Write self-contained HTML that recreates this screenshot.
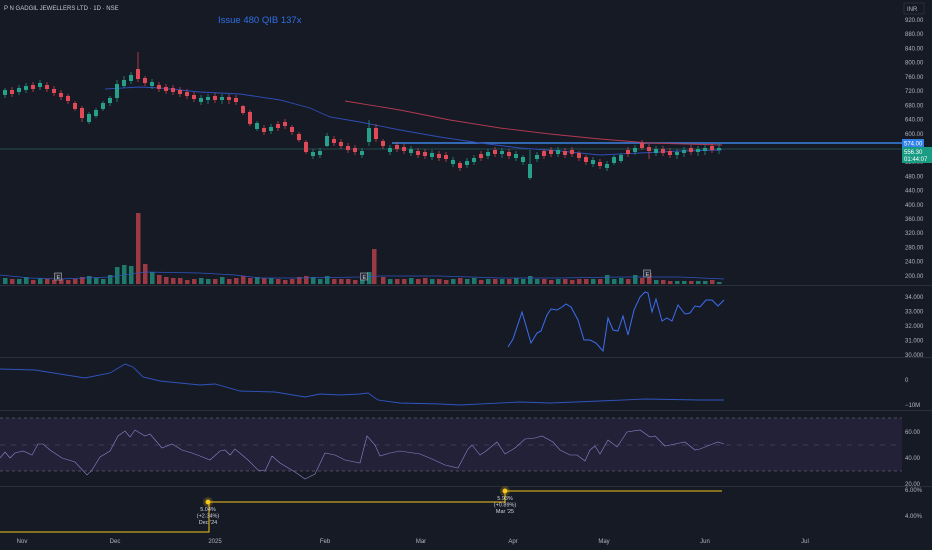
<!DOCTYPE html>
<html><head><meta charset="utf-8">
<style>
html,body{margin:0;padding:0;background:#161a25;}
body{width:932px;height:550px;overflow:hidden;position:relative;font-family:"Liberation Sans",sans-serif;}
svg{position:absolute;left:0;top:0}
.ax{fill:#b2b5be;font-size:6px;font-family:"Liberation Sans",sans-serif}
.G rect{fill:#26a08b}.R rect{fill:#e04a56}
.VG rect{fill:#1f7a6e}.VR rect{fill:#9c3a43}
.lb{fill:#d1d4dc;font-size:5.5px;font-family:"Liberation Sans",sans-serif}
</style></head>
<body>
<svg width="932" height="550" viewBox="0 0 932 550" xmlns="http://www.w3.org/2000/svg">
<rect width="932" height="550" fill="#161a25"/>
<rect x="0" y="285" width="932" height="1" fill="#2a2e39"/>
<rect x="0" y="357" width="932" height="1" fill="#2a2e39"/>
<rect x="0" y="410" width="932" height="1" fill="#2a2e39"/>
<rect x="0" y="486" width="932" height="1" fill="#2a2e39"/>
<rect x="0" y="418" width="902" height="53" fill="#7e57c2" fill-opacity="0.12"/>
<line x1="0" y1="418" x2="902" y2="418" stroke="#787b86" stroke-dasharray="3,3" stroke-width="0.6"/>
<line x1="0" y1="445" x2="902" y2="445" stroke="#787b86" stroke-dasharray="5,6" stroke-width="0.5" opacity="0.6"/>
<line x1="0" y1="471" x2="902" y2="471" stroke="#787b86" stroke-dasharray="3,3" stroke-width="0.6"/>

<!-- price axis -->
<g class="ax">
<text x="905" y="22">920.00</text><text x="905" y="36">880.00</text><text x="905" y="50.5">840.00</text><text x="905" y="64.7">800.00</text><text x="905" y="78.9">760.00</text><text x="905" y="93.1">720.00</text><text x="905" y="107.3">680.00</text><text x="905" y="121.5">640.00</text><text x="905" y="135.8">600.00</text><text x="905" y="164.2">520.00</text><text x="905" y="178.4">480.00</text><text x="905" y="192.6">440.00</text><text x="905" y="206.8">400.00</text><text x="905" y="221">360.00</text><text x="905" y="235.2">320.00</text><text x="905" y="249.5">280.00</text><text x="905" y="263.7">240.00</text><text x="905" y="277.9">200.00</text>
</g>

<line x1="0" y1="149" x2="902" y2="149" stroke="#2a8f86" stroke-width="0.6" opacity="0.8"/>
<line x1="392" y1="143" x2="902" y2="143" stroke="#3c82e0" stroke-width="1.6"/>
<polyline fill="none" stroke="#2f4fb8" stroke-width="0.9" points="105,89 140,87 160,88 200,92 240,94 280,100 310,108 330,117 360,122 400,130 440,137 480,143 520,148 560,151 600,155 640,153 680,151 722,150"/>
<polyline fill="none" stroke="#b23a52" stroke-width="0.9" points="345,101 400,110 450,120 500,128 550,134 600,139 650,143 722,145"/>

<!-- volume -->
<g class="VG"><rect x="3" y="278" width="4.5" height="6"/><rect x="17" y="279" width="4.5" height="5"/><rect x="24" y="277" width="4.5" height="7"/><rect x="38" y="278" width="4.5" height="6"/><rect x="87" y="276" width="4.5" height="8"/><rect x="94" y="278" width="4.5" height="6"/><rect x="101" y="279" width="4.5" height="5"/><rect x="108" y="275" width="4.5" height="9"/><rect x="115" y="267" width="4.5" height="17"/><rect x="122" y="265" width="4.5" height="19"/><rect x="129" y="266" width="4.5" height="18"/><rect x="150" y="272" width="4.5" height="12"/><rect x="199" y="278" width="4.5" height="6"/><rect x="206" y="279" width="4.5" height="5"/><rect x="220" y="277" width="4.5" height="7"/><rect x="255" y="277" width="4.5" height="7"/><rect x="269" y="278" width="4.5" height="6"/><rect x="311" y="277" width="4.5" height="7"/><rect x="318" y="279" width="4.5" height="5"/><rect x="325" y="276" width="4.5" height="8"/><rect x="360" y="278" width="4.5" height="6"/><rect x="367" y="272" width="4.5" height="12"/><rect x="388" y="279" width="4.5" height="5"/><rect x="409" y="278" width="4.5" height="6"/><rect x="430" y="279" width="4.5" height="5"/><rect x="451" y="279" width="4.5" height="5"/><rect x="465" y="279" width="4.5" height="5"/><rect x="472" y="278" width="4.5" height="6"/><rect x="486" y="279" width="4.5" height="5"/><rect x="500" y="279" width="4.5" height="5"/><rect x="514" y="278" width="4.5" height="6"/><rect x="521" y="279" width="4.5" height="5"/><rect x="528" y="276" width="4.5" height="8"/><rect x="535" y="279" width="4.5" height="5"/><rect x="556" y="279" width="4.5" height="5"/><rect x="591" y="279" width="4.5" height="5"/><rect x="605" y="275" width="4.5" height="9"/><rect x="612" y="279" width="4.5" height="5"/><rect x="619" y="278" width="4.5" height="6"/><rect x="633" y="275" width="4.5" height="9"/><rect x="654" y="280" width="4.5" height="4"/><rect x="675" y="281" width="4.5" height="3"/><rect x="682" y="281" width="4.5" height="3"/><rect x="696" y="281" width="4.5" height="3"/><rect x="703" y="281" width="4.5" height="3"/><rect x="717" y="282" width="4.5" height="2"/></g>
<g class="VR"><rect x="10" y="279" width="4.5" height="5"/><rect x="31" y="280" width="4.5" height="4"/><rect x="45" y="279" width="4.5" height="5"/><rect x="52" y="280" width="4.5" height="4"/><rect x="59" y="279" width="4.5" height="5"/><rect x="66" y="280" width="4.5" height="4"/><rect x="73" y="279" width="4.5" height="5"/><rect x="80" y="277" width="4.5" height="7"/><rect x="136" y="213" width="4.5" height="71"/><rect x="143" y="264" width="4.5" height="20"/><rect x="157" y="275" width="4.5" height="9"/><rect x="164" y="277" width="4.5" height="7"/><rect x="171" y="278" width="4.5" height="6"/><rect x="178" y="278" width="4.5" height="6"/><rect x="185" y="280" width="4.5" height="4"/><rect x="192" y="279" width="4.5" height="5"/><rect x="213" y="279" width="4.5" height="5"/><rect x="227" y="279" width="4.5" height="5"/><rect x="234" y="278" width="4.5" height="6"/><rect x="241" y="276" width="4.5" height="8"/><rect x="248" y="278" width="4.5" height="6"/><rect x="262" y="278" width="4.5" height="6"/><rect x="276" y="279" width="4.5" height="5"/><rect x="283" y="280" width="4.5" height="4"/><rect x="290" y="279" width="4.5" height="5"/><rect x="297" y="277" width="4.5" height="7"/><rect x="304" y="276" width="4.5" height="8"/><rect x="332" y="279" width="4.5" height="5"/><rect x="339" y="279" width="4.5" height="5"/><rect x="346" y="279" width="4.5" height="5"/><rect x="353" y="280" width="4.5" height="4"/><rect x="372" y="249" width="4.5" height="35"/><rect x="381" y="277" width="4.5" height="7"/><rect x="395" y="279" width="4.5" height="5"/><rect x="402" y="279" width="4.5" height="5"/><rect x="416" y="279" width="4.5" height="5"/><rect x="423" y="278" width="4.5" height="6"/><rect x="437" y="279" width="4.5" height="5"/><rect x="444" y="280" width="4.5" height="4"/><rect x="458" y="278" width="4.5" height="6"/><rect x="479" y="280" width="4.5" height="4"/><rect x="493" y="279" width="4.5" height="5"/><rect x="507" y="279" width="4.5" height="5"/><rect x="542" y="279" width="4.5" height="5"/><rect x="549" y="280" width="4.5" height="4"/><rect x="563" y="279" width="4.5" height="5"/><rect x="570" y="280" width="4.5" height="4"/><rect x="577" y="279" width="4.5" height="5"/><rect x="584" y="279" width="4.5" height="5"/><rect x="598" y="279" width="4.5" height="5"/><rect x="626" y="279" width="4.5" height="5"/><rect x="640" y="278" width="4.5" height="6"/><rect x="647" y="273" width="4.5" height="11"/><rect x="661" y="280" width="4.5" height="4"/><rect x="668" y="281" width="4.5" height="3"/><rect x="689" y="281" width="4.5" height="3"/><rect x="710" y="280" width="4.5" height="4"/></g>
<polyline fill="none" stroke="#2f55c0" stroke-width="0.7" points="0,275 30,278 60,279 110,277 145,272 200,273 235,275 260,278 300,278 360,277 380,276 440,276 500,278 560,278 620,277 680,277 724,279"/>
<g fill="#2a2e39" stroke="#b2b5be" stroke-width="0.6"><rect x="54.5" y="273" width="7" height="7"/><rect x="360.5" y="273" width="7" height="7"/><rect x="643.5" y="270" width="7" height="7"/></g>
<g class="lb" font-size="5"><text x="56.5" y="279">E</text><text x="362.5" y="279">E</text><text x="645.5" y="276">E</text></g>

<!-- wicks -->
<path fill="none" stroke="#26a08b" stroke-width="0.7" d="M5 88v10M19 85v10M26 83v10M40 80v10M89 112v12M96 108v10M103 101v10M110 96v10M117 80v22M124 76v12M131 72v12M152 79v10M201 95v10M208 94v10M222 94v10M257 121v10M271 124v10M313 149v10M320 148v10M327 133v14M362 148v10M369 120v26M390 145v10M411 146v10M432 150v10M453 157v10M467 158v10M474 155v10M488 149v10M502 148v10M516 151v10M523 155v10M530 150v30M537 152v10M558 147v10M593 157v10M607 161v10M614 155v10M621 153v10M635 145v10M656 146v10M677 149v10M684 147v10M698 146v10M705 145v10M719 144v10"/>
<path fill="none" stroke="#e04a56" stroke-width="0.7" d="M12 87v10M33 82v10M47 82v10M54 86v10M61 90v10M68 94v10M75 101v10M82 106v16M138 52v30M145 76v10M159 82v10M166 84v10M173 85v10M180 87v10M187 89v10M194 92v10M215 93v10M229 94v10M236 95v10M243 105v10M250 110v16M264 125v10M278 121v10M285 119v10M292 125v10M299 132v10M306 140v14M334 136v10M341 139v10M348 143v10M355 145v10M376 124v18M383 139v10M397 142v10M404 144v10M418 148v10M425 149v10M439 151v10M446 152v10M460 161v10M481 151v10M495 147v10M509 149v10M544 149v10M551 147v10M565 148v10M572 147v10M579 151v10M586 155v10M600 159v10M628 147v10M642 140v10M649 144v15M663 146v10M670 148v10M691 145v10M712 143v10"/>
<!-- bodies -->
<g class="G"><rect x="3" y="90" width="4" height="5"/><rect x="17" y="88" width="4" height="4"/><rect x="24" y="86" width="4" height="4"/><rect x="38" y="83" width="4" height="4"/><rect x="87" y="114" width="4" height="8"/><rect x="94" y="110" width="4" height="6"/><rect x="101" y="103" width="4" height="6"/><rect x="108" y="98" width="4" height="5"/><rect x="115" y="84" width="4" height="14"/><rect x="122" y="80" width="4" height="6"/><rect x="129" y="75" width="4" height="6"/><rect x="150" y="82" width="4" height="4"/><rect x="199" y="98" width="4" height="4"/><rect x="206" y="97" width="4" height="3"/><rect x="220" y="97" width="4" height="3"/><rect x="255" y="123" width="4" height="6"/><rect x="269" y="127" width="4" height="4"/><rect x="311" y="152" width="4" height="4"/><rect x="318" y="151" width="4" height="4"/><rect x="325" y="136" width="4" height="10"/><rect x="360" y="151" width="4" height="4"/><rect x="367" y="128" width="4" height="14"/><rect x="388" y="148" width="4" height="4"/><rect x="409" y="149" width="4" height="4"/><rect x="430" y="153" width="4" height="4"/><rect x="451" y="160" width="4" height="4"/><rect x="465" y="161" width="4" height="4"/><rect x="472" y="158" width="4" height="4"/><rect x="486" y="152" width="4" height="4"/><rect x="500" y="151" width="4" height="3"/><rect x="514" y="154" width="4" height="4"/><rect x="521" y="157" width="4" height="5"/><rect x="528" y="164" width="4" height="14"/><rect x="535" y="155" width="4" height="4"/><rect x="556" y="150" width="4" height="4"/><rect x="591" y="160" width="4" height="4"/><rect x="605" y="164" width="4" height="4"/><rect x="612" y="157" width="4" height="6"/><rect x="619" y="155" width="4" height="6"/><rect x="633" y="148" width="4" height="4"/><rect x="654" y="149" width="4" height="4"/><rect x="675" y="152" width="4" height="3"/><rect x="682" y="150" width="4" height="3"/><rect x="696" y="149" width="4" height="3"/><rect x="703" y="148" width="4" height="3"/><rect x="717" y="148" width="4" height="2"/></g>
<g class="R"><rect x="10" y="90" width="4" height="4"/><rect x="31" y="85" width="4" height="4"/><rect x="45" y="85" width="4" height="4"/><rect x="52" y="89" width="4" height="4"/><rect x="59" y="93" width="4" height="4"/><rect x="66" y="96" width="4" height="5"/><rect x="73" y="103" width="4" height="6"/><rect x="80" y="108" width="4" height="10"/><rect x="136" y="69" width="4" height="10"/><rect x="143" y="78" width="4" height="5"/><rect x="157" y="85" width="4" height="4"/><rect x="164" y="87" width="4" height="4"/><rect x="171" y="88" width="4" height="4"/><rect x="178" y="90" width="4" height="4"/><rect x="185" y="92" width="4" height="4"/><rect x="192" y="95" width="4" height="4"/><rect x="213" y="96" width="4" height="4"/><rect x="227" y="97" width="4" height="3"/><rect x="234" y="98" width="4" height="4"/><rect x="241" y="106" width="4" height="7"/><rect x="248" y="112" width="4" height="12"/><rect x="262" y="128" width="4" height="4"/><rect x="276" y="124" width="4" height="4"/><rect x="283" y="122" width="4" height="4"/><rect x="290" y="127" width="4" height="5"/><rect x="297" y="134" width="4" height="6"/><rect x="304" y="142" width="4" height="10"/><rect x="332" y="139" width="4" height="4"/><rect x="339" y="142" width="4" height="4"/><rect x="346" y="146" width="4" height="4"/><rect x="353" y="148" width="4" height="4"/><rect x="374" y="128" width="4" height="11"/><rect x="381" y="141" width="4" height="5"/><rect x="395" y="145" width="4" height="4"/><rect x="402" y="147" width="4" height="4"/><rect x="416" y="151" width="4" height="4"/><rect x="423" y="152" width="4" height="4"/><rect x="437" y="154" width="4" height="4"/><rect x="444" y="155" width="4" height="4"/><rect x="458" y="163" width="4" height="5"/><rect x="479" y="154" width="4" height="4"/><rect x="493" y="150" width="4" height="4"/><rect x="507" y="152" width="4" height="4"/><rect x="542" y="151" width="4" height="5"/><rect x="549" y="150" width="4" height="4"/><rect x="563" y="151" width="4" height="4"/><rect x="570" y="150" width="4" height="4"/><rect x="577" y="153" width="4" height="5"/><rect x="584" y="157" width="4" height="5"/><rect x="598" y="162" width="4" height="4"/><rect x="626" y="150" width="4" height="4"/><rect x="640" y="143" width="4" height="5"/><rect x="647" y="147" width="4" height="4"/><rect x="661" y="149" width="4" height="4"/><rect x="668" y="151" width="4" height="4"/><rect x="689" y="148" width="4" height="4"/><rect x="710" y="146" width="4" height="4"/></g>

<!-- badges -->
<rect x="902" y="139" width="22" height="8" fill="#2f7fe8"/><text x="904" y="145.5" fill="#fff" font-size="6">574.00</text>
<rect x="902" y="147" width="30" height="16" fill="#1a9b84"/><text x="904" y="154" fill="#fff" font-size="6">556.30</text><text x="904" y="161" fill="#fff" font-size="6">01:44:07</text>

<!-- panel 2 -->
<polyline fill="none" stroke="#3d6df0" stroke-width="1" points="508,347 513,339 522,312 531,343 537,333 541,331 547,315 551,309 557,310 562,307 566,304 571,307 578,320 584,340 590,340 596,343 603,351 608,318 613,330 618,331 623,316 628,335 634,310 640,297 645,292 648,293 652,312 656,299 662,321 667,318 672,321 678,305 685,314 690,313 695,306 700,307 706,300 712,300 718,306 724,300"/>
<g class="ax"><text x="905" y="299">34.000</text><text x="905" y="313.5">33.000</text><text x="905" y="328">32.000</text><text x="905" y="342.5">31.000</text><text x="905" y="357">30.000</text></g>
<!-- panel 3 -->
<polyline fill="none" stroke="#2f55c0" stroke-width="0.9" points="0,369 35,370 85,378 110,373 125,364 133,367 143,377 160,381 200,385 215,384 240,391 275,392 305,397 320,394 340,395 360,394 368,393 378,400 400,403 440,404 460,405 520,402 550,403 600,401 645,399 700,400 724,400"/>
<g class="ax"><text x="905" y="382">0</text><text x="905" y="407">−10M</text></g>
<!-- RSI -->
<polyline fill="none" stroke="#8d84c9" stroke-width="0.6" points="0,458 5,452 10,458 15,453 23,451 32,455 38,444 43,444 50,450 62,458 75,462 87,475 92,470 100,457 110,451 118,436 125,431 130,437 135,430 145,436 150,434 162,448 172,444 182,450 192,453 200,456 210,460 220,451 225,450 230,455 235,449 248,460 258,470 265,471 272,456 280,463 295,472 305,479 315,474 325,453 335,455 345,460 360,463 367,436 375,445 380,456 390,453 400,451 420,454 432,459 445,465 458,468 468,449 472,445 480,455 486,451 497,442 505,454 515,448 525,439 535,438 542,436 553,442 560,450 570,455 577,455 585,461 590,450 595,446 600,454 608,440 617,447 627,432 640,430 650,437 655,436 665,446 675,444 685,442 695,450 700,449 710,445 718,442 724,444"/>
<g class="ax"><text x="905" y="434">60.00</text><text x="905" y="460">40.00</text><text x="905" y="486">20.00</text></g>
<!-- yellow -->
<polyline fill="none" stroke="#f0c419" stroke-width="1" points="0,532 209,532 209,502 505,502 505,491 722,491"/>
<circle cx="208" cy="502" r="5" fill="#f0c419" opacity="0.2"/><circle cx="208" cy="502" r="2.5" fill="#f5c518"/>
<circle cx="505" cy="491" r="5" fill="#f0c419" opacity="0.2"/><circle cx="505" cy="491" r="2.5" fill="#f5c518"/>
<g class="lb" text-anchor="middle"><text x="208" y="511">5.04%</text><text x="208" y="517.5">(+2.34%)</text><text x="208" y="524">Dec '24</text><text x="505" y="500">5.93%</text><text x="505" y="506.5">(+0.89%)</text><text x="505" y="513">Mar '25</text></g>
<g class="ax"><text x="905" y="492">6.00%</text><text x="905" y="518">4.00%</text></g>
<!-- x axis -->
<g class="ax" text-anchor="middle"><text x="22" y="543">Nov</text><text x="115" y="543">Dec</text><text x="215" y="543">2025</text><text x="325" y="543">Feb</text><text x="421" y="543">Mar</text><text x="513" y="543">Apr</text><text x="604" y="543">May</text><text x="705" y="543">Jun</text><text x="805" y="543">Jul</text></g>

<text x="4" y="10" fill="#c8cad0" font-size="6">P N GADGIL JEWELLERS LTD · 1D · NSE</text>
<text x="218" y="23" fill="#2f6fe4" font-size="9.5">Issue 480 QIB 137x</text>
<rect x="904" y="3" width="20" height="11" fill="#161a25" stroke="#363a45" stroke-width="0.6"/>
<text x="907" y="11" class="ax">INR</text>
</svg>
</body></html>
